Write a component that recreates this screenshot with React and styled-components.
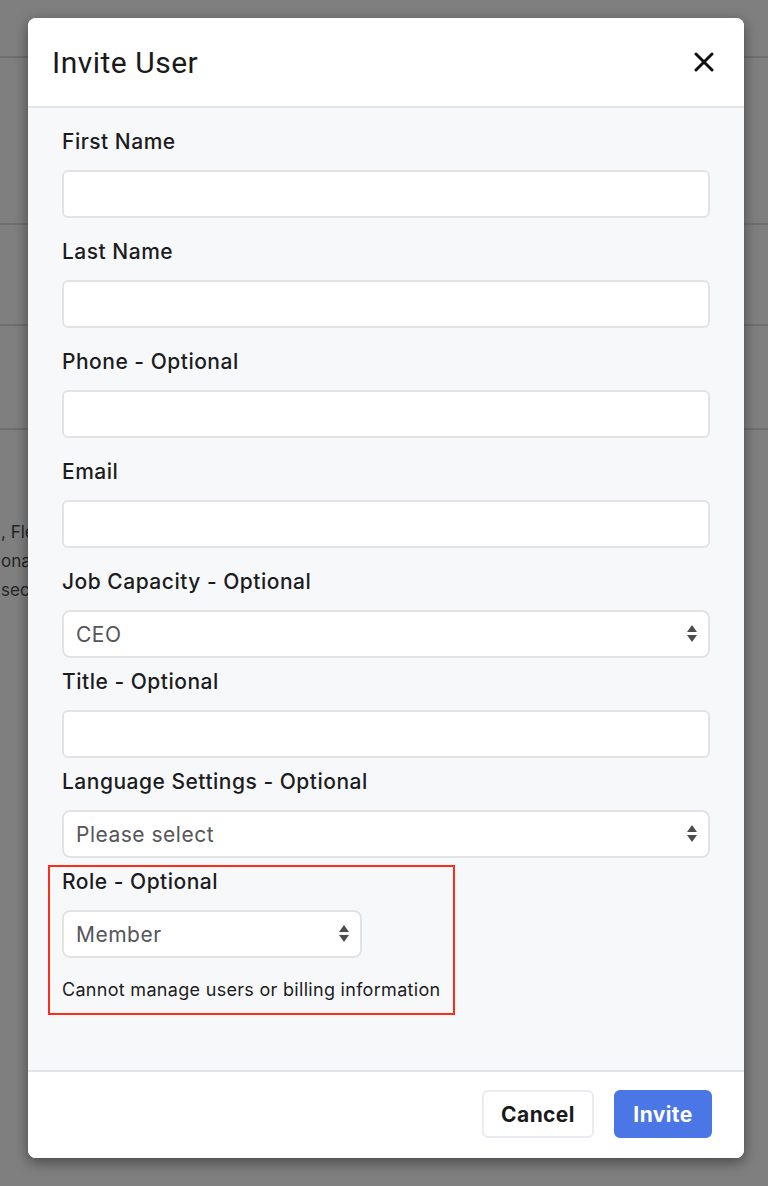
import React from 'react'
import styled, { createGlobalStyle } from 'styled-components'

const Global = createGlobalStyle`
    html, body {
        margin: 0;
        padding: 0;
    }
    body {
        font-family: Inter, "Noto Sans", sans-serif;
        background: #fff;
        color: #1c1c1e;
    }
    * { box-sizing: border-box; }
`

const Page = styled.div`
    position: relative;
    width: 768px;
    height: 1186px;
    overflow: hidden;
    background: #fff;
`

const PageRule = styled.div`
    height: ${p => p.h}px;
    border-bottom: 2px solid #dedede;
`

const PageText = styled.div`
    margin-top: 88px;
    padding-left: 1px;
    font-size: 17px;
    line-height: 29px;
    color: #4a4a52;
    white-space: nowrap;
`

const Overlay = styled.div`
    position: absolute;
    inset: 0;
    background: rgba(0, 0, 0, 0.5);
`

const Modal = styled.div`
    position: absolute;
    left: 28px;
    top: 18px;
    width: 716px;
    height: 1140px;
    border-radius: 8px;
    background: #f7f8fa;
    box-shadow: 0 4px 14px rgba(0, 0, 0, 0.45);
    display: flex;
    flex-direction: column;
    overflow: hidden;
`

const Header = styled.div`
    height: 90px;
    flex-shrink: 0;
    background: #fff;
    border-bottom: 2px solid #e3e4e7;
    display: flex;
    align-items: center;
    justify-content: space-between;
    padding: 0 30px 0 24px;
`

const Title = styled.h2`
    margin: 0;
    font-family: Roboto, "Liberation Sans", sans-serif;
    font-weight: 400;
    font-size: 30px;
    letter-spacing: 0.5px;
    color: #1a1a1a;
`

const Close = styled.button`
    border: none;
    background: none;
    padding: 0;
    display: flex;
    cursor: pointer;
`

const Body = styled.div`
    flex: 1;
    padding: 22px 34px 0;
    display: flex;
    flex-direction: column;
`

const Field = styled.div`
    display: flex;
    flex-direction: column;
    margin-bottom: ${p => p.gap}px;
`

const Label = styled.label`
    font-size: 21px;
    line-height: 24px;
    font-weight: 500;
    letter-spacing: 0.5px;
    color: #1c1c1e;
    margin-bottom: 16px;
`

const Input = styled.input`
    height: 48px;
    width: 100%;
    border: 2px solid #e3e3e5;
    border-radius: 6px;
    background: #fff;
    font-family: inherit;
    font-size: 21px;
    padding: 0 12px;
    outline: none;
`

const SelectWrap = styled.div`
    position: relative;
    width: ${p => p.w || '100%'};
`

const Select = styled.select`
    appearance: none;
    -webkit-appearance: none;
    height: 48px;
    width: 100%;
    border: 2px solid #e3e3e5;
    border-radius: 8px;
    background: #fff;
    font-family: inherit;
    font-size: 21px;
    letter-spacing: 0.5px;
    color: #55555a;
    padding: 0 36px 0 12px;
    outline: none;
`

const Arrows = styled.svg`
    position: absolute;
    right: 13px;
    top: 15px;
    pointer-events: none;
`

const RoleGroup = styled.div`
    position: relative;
`

const Highlight = styled.div`
    position: absolute;
    left: -14px;
    top: -5px;
    width: 407px;
    height: 150px;
    border: 2px solid #ff2d17;
    pointer-events: none;
`

const Hint = styled.p`
    margin: 22px 0 0;
    font-size: 18px;
    line-height: 20px;
    letter-spacing: 0.3px;
    color: #1c1c1e;
`

const Footer = styled.div`
    height: 88px;
    flex-shrink: 0;
    background: #fff;
    border-top: 2px solid #e3e4e7;
    display: flex;
    justify-content: flex-end;
    align-items: flex-start;
    gap: 20px;
    padding: 18px 32px 0 0;
`

const Button = styled.button`
    height: 48px;
    width: ${p => p.w}px;
    padding: 0;
    border-radius: 6px;
    border: 2px solid ${p => (p.primary ? '#4b76e5' : '#e8ebf1')};
    background: ${p => (p.primary ? '#4b76e5' : '#fff')};
    color: ${p => (p.primary ? '#fff' : '#1a1a1a')};
    font-family: Inter, "Noto Sans", sans-serif;
    font-size: 21px;
    font-weight: 700;
    letter-spacing: 0.4px;
    cursor: pointer;
`

const SelectArrows = () => (
    <Arrows width="10" height="18" viewBox="0 0 10 18">
        <path d="M5 0 L10 7 L0 7 Z" fill="#4d4d50" />
        <path d="M0 10 L10 10 L5 17 Z" fill="#4d4d50" />
    </Arrows>
)

const Dropdown = ({ value, w }) => (
    <SelectWrap w={w}>
        <Select defaultValue={value}>
            <option>{value}</option>
        </Select>
        <SelectArrows />
    </SelectWrap>
)

const App = () => {
    return (
        <Page>
            <Global />
            <PageRule h={58} />
            <PageRule h={167} />
            <PageRule h={101} />
            <PageRule h={104} />
            <PageText>
                <div>, Flexible plans</div>
                <div>onal features</div>
                <div>second</div>
            </PageText>
            <Overlay />
            <Modal>
                <Header>
                    <Title>Invite User</Title>
                    <Close aria-label="Close">
                        <svg width="20" height="20" viewBox="0 0 20 20">
                            <path d="M2 2 L18 18 M18 2 L2 18" stroke="#111" strokeWidth="3" strokeLinecap="round" />
                        </svg>
                    </Close>
                </Header>
                <Body>
                    <Field gap={22}>
                        <Label>First Name</Label>
                        <Input />
                    </Field>
                    <Field gap={22}>
                        <Label>Last Name</Label>
                        <Input />
                    </Field>
                    <Field gap={22}>
                        <Label>Phone - Optional</Label>
                        <Input />
                    </Field>
                    <Field gap={22}>
                        <Label>Email</Label>
                        <Input />
                    </Field>
                    <Field gap={12}>
                        <Label>Job Capacity - Optional</Label>
                        <Dropdown value="CEO" />
                    </Field>
                    <Field gap={12}>
                        <Label>Title - Optional</Label>
                        <Input />
                    </Field>
                    <Field gap={12}>
                        <Label>Language Settings - Optional</Label>
                        <Dropdown value="Please select" />
                    </Field>
                    <RoleGroup>
                        <Field gap={0}>
                            <Label>Role - Optional</Label>
                            <Dropdown value="Member" w="300px" />
                        </Field>
                        <Hint>Cannot manage users or billing information</Hint>
                        <Highlight />
                    </RoleGroup>
                </Body>
                <Footer>
                    <Button w={112}>Cancel</Button>
                    <Button primary w={98}>Invite</Button>
                </Footer>
            </Modal>
        </Page>
    )
}

export default App
